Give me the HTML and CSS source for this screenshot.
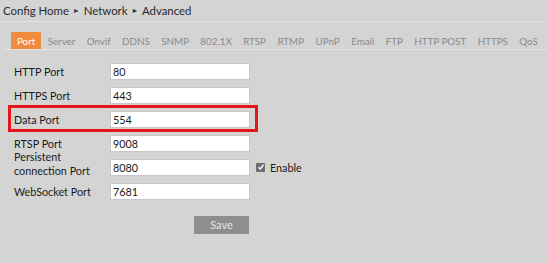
FILE: index.html
```html
<!DOCTYPE html>
<html>
<head>
<meta charset="utf-8">
<link rel="stylesheet" href="styles.css">
</head>
<body>
<div class="crumbs">Config Home <span class="arr">&#9658;</span> Network <span class="arr">&#9658;</span> Advanced</div>
<div class="tabs">
  <span class="tab active">Port</span>
  <span class="tab">Server</span>
  <span class="tab">Onvif</span>
  <span class="tab">DDNS</span>
  <span class="tab">SNMP</span>
  <span class="tab">802.1X</span>
  <span class="tab">RTSP</span>
  <span class="tab">RTMP</span>
  <span class="tab">UPnP</span>
  <span class="tab">Email</span>
  <span class="tab">FTP</span>
  <span class="tab">HTTP POST</span>
  <span class="tab">HTTPS</span>
  <span class="tab">QoS</span>
</div>
<div class="form">
  <div class="row"><span class="lbl">HTTP Port</span><span class="inp">80</span></div>
  <div class="row"><span class="lbl">HTTPS Port</span><span class="inp">443</span></div>
  <div class="row hl"><span class="lbl">Data Port</span><span class="inp">554</span><span class="mark"></span></div>
  <div class="row"><span class="lbl">RTSP Port</span><span class="inp">9008</span></div>
  <div class="row"><span class="lbl two">Persistent<br>connection Port</span><span class="inp">8080</span><span class="chk"><span class="box"><svg width="8" height="8" viewBox="0 0 8 8"><path d="M1.5 4.2 L3.2 6 L6.6 1.8" fill="none" stroke="#fff" stroke-width="1.4"/></svg></span>Enable</span></div>
  <div class="row"><span class="lbl">WebSocket Port</span><span class="inp">7681</span></div>
  <div class="actions"><span class="save">Save</span></div>
</div>
</body>
</html>
```
FILE: styles.css
```css
html, body {
  margin: 0;
  padding: 0;
  background: #d4d4d4;
  font-family: Lato, "Noto Sans", sans-serif;
  color: #222;
}
.crumbs {
  height: 21px;
  line-height: 21px;
  padding-left: 3px;
  font-size: 11.4px;
  color: #2a2a2a;
  border-bottom: 1px solid #e4e4e4;
}
.arr {
  font-size: 7px;
  vertical-align: 2px;
  margin: 0 1px;
  color: #333;
}
.tabs {
  display: flex;
  justify-content: space-between;
  margin: 10px 0 0 3px;
  padding: 0 4px 0 8px;
  border-bottom: 1px solid #e4e4e4;
  height: 18px;
  width: 544px;
  box-sizing: border-box;
}
.tab {
  font-size: 9.8px;
  color: #8a8a8a;
  line-height: 18px;
  padding: 0 5px;
  white-space: nowrap;
}
.tab.active {
  background: #f08a3c;
  color: #fff;
  padding: 0 6px;
}
.form {
  display: flex;
  flex-direction: column;
  gap: 7px;
  margin-top: 13px;
  padding-left: 14px;
}
.row {
  position: relative;
  display: flex;
  align-items: center;
  height: 17px;
}
.lbl {
  width: 96px;
  font-size: 10.8px;
  color: #1a1a1a;
  flex: none;
}
.lbl.two {
  line-height: 14px;
  margin-top: -8px;
}
.inp {
  width: 140px;
  height: 17px;
  box-sizing: border-box;
  background: #fff;
  border: 1px solid #c8c8c8;
  font-size: 10.8px;
  line-height: 15px;
  padding-left: 2px;
  color: #1a1a1a;
  flex: none;
}
.mark {
  position: absolute;
  left: -6px;
  top: -6px;
  width: 250px;
  height: 27px;
  border: 3.5px solid #e3161c;
  box-sizing: border-box;
}
.chk {
  display: flex;
  align-items: center;
  margin-left: 6px;
  margin-top: -1px;
  font-size: 10.8px;
  color: #1a1a1a;
}
.box {
  width: 9px;
  height: 9px;
  background: #6e6e6e;
  border-radius: 1px;
  display: inline-flex;
  align-items: center;
  justify-content: center;
  margin-right: 5px;
}
.actions {
  padding-left: 180px;
  margin-top: 6px;
}
.save {
  display: inline-block;
  width: 55px;
  height: 18px;
  line-height: 18px;
  text-align: center;
  background: #8e8e8e;
  color: #e6e6e6;
  font-size: 11px;
}
```
